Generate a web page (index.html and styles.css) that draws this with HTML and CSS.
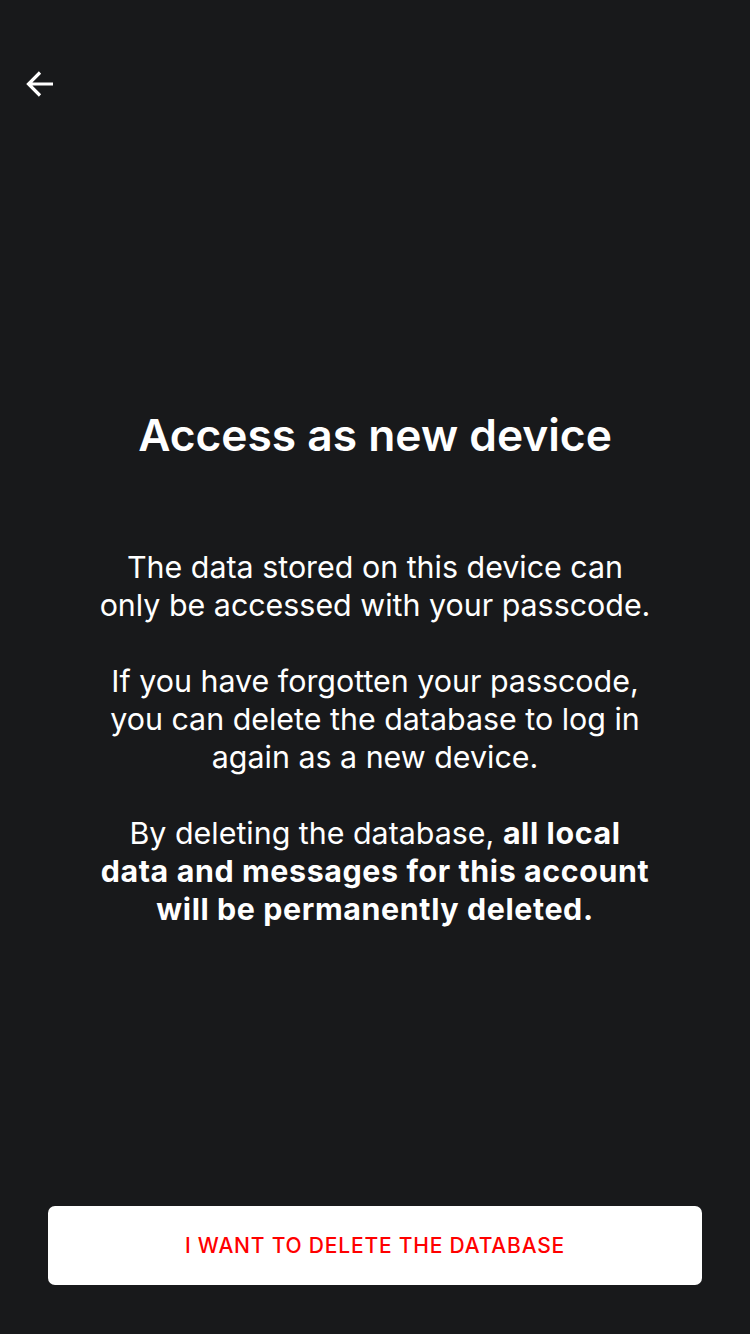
FILE: index.html
```html
<!DOCTYPE html>
<html lang="en">
<head>
<meta charset="utf-8">
<link rel="stylesheet" href="styles.css">
</head>
<body>
<div class="screen">
  <header class="topbar">
    <button class="back" aria-label="Back">
      <svg width="30" height="30" viewBox="0 0 30 30"><path d="M28 15H4M15 3.5L3.5 15L15 26.5" fill="none" stroke="#fff" stroke-width="3.2" stroke-linecap="butt" stroke-linejoin="miter"/></svg>
    </button>
  </header>
  <main class="content">
    <h1 class="title">Access as new device</h1>
    <p class="text">The data stored on this device can<br>only be accessed with your passcode.</p>
    <p class="text">If you have forgotten your passcode,<br>you can delete the database to log in<br>again as a new device.</p>
    <p class="text">By deleting the database, <strong>all local<br>data and messages for this account<br>will be permanently deleted.</strong></p>
  </main>
  <footer class="footer">
    <button class="danger">I WANT TO DELETE THE DATABASE</button>
  </footer>
</div>
</body>
</html>
```
FILE: styles.css
```css
* { box-sizing: border-box; }
html, body { margin: 0; padding: 0; }
body {
  background: #18191b;
  color: #fff;
  font-family: Inter, "Noto Sans", sans-serif;
}
.screen {
  height: 1334px;
  display: flex;
  flex-direction: column;
}
.topbar {
  height: 120px;
  padding: 69px 0 0 25px;
}
.back {
  background: none;
  border: 0;
  padding: 0;
  width: 30px;
  height: 30px;
  display: block;
}
.content {
  flex: 1;
  display: flex;
  flex-direction: column;
  justify-content: center;
  align-items: center;
  text-align: center;
  padding: 9px 20px 0;
}
.title {
  margin: 0 0 85px;
  font-size: 44.3px;
  font-weight: 600;
  line-height: 56px;
}
.text {
  margin: 0 0 38px;
  font-size: 30.4px;
  line-height: 38px;
  font-weight: 400;
  white-space: nowrap;
}
.text:last-child { margin-bottom: 0; }
.text strong { font-weight: 700; letter-spacing: 0.6px; }
.footer {
  padding: 0 48px 49px;
}
.danger {
  width: 100%;
  height: 79px;
  background: #fff;
  border: 0;
  border-radius: 7px;
  color: #f00;
  font-family: Inter, "Noto Sans", sans-serif;
  font-size: 21px;
  font-weight: 500;
  letter-spacing: 0.8px;
}
```
